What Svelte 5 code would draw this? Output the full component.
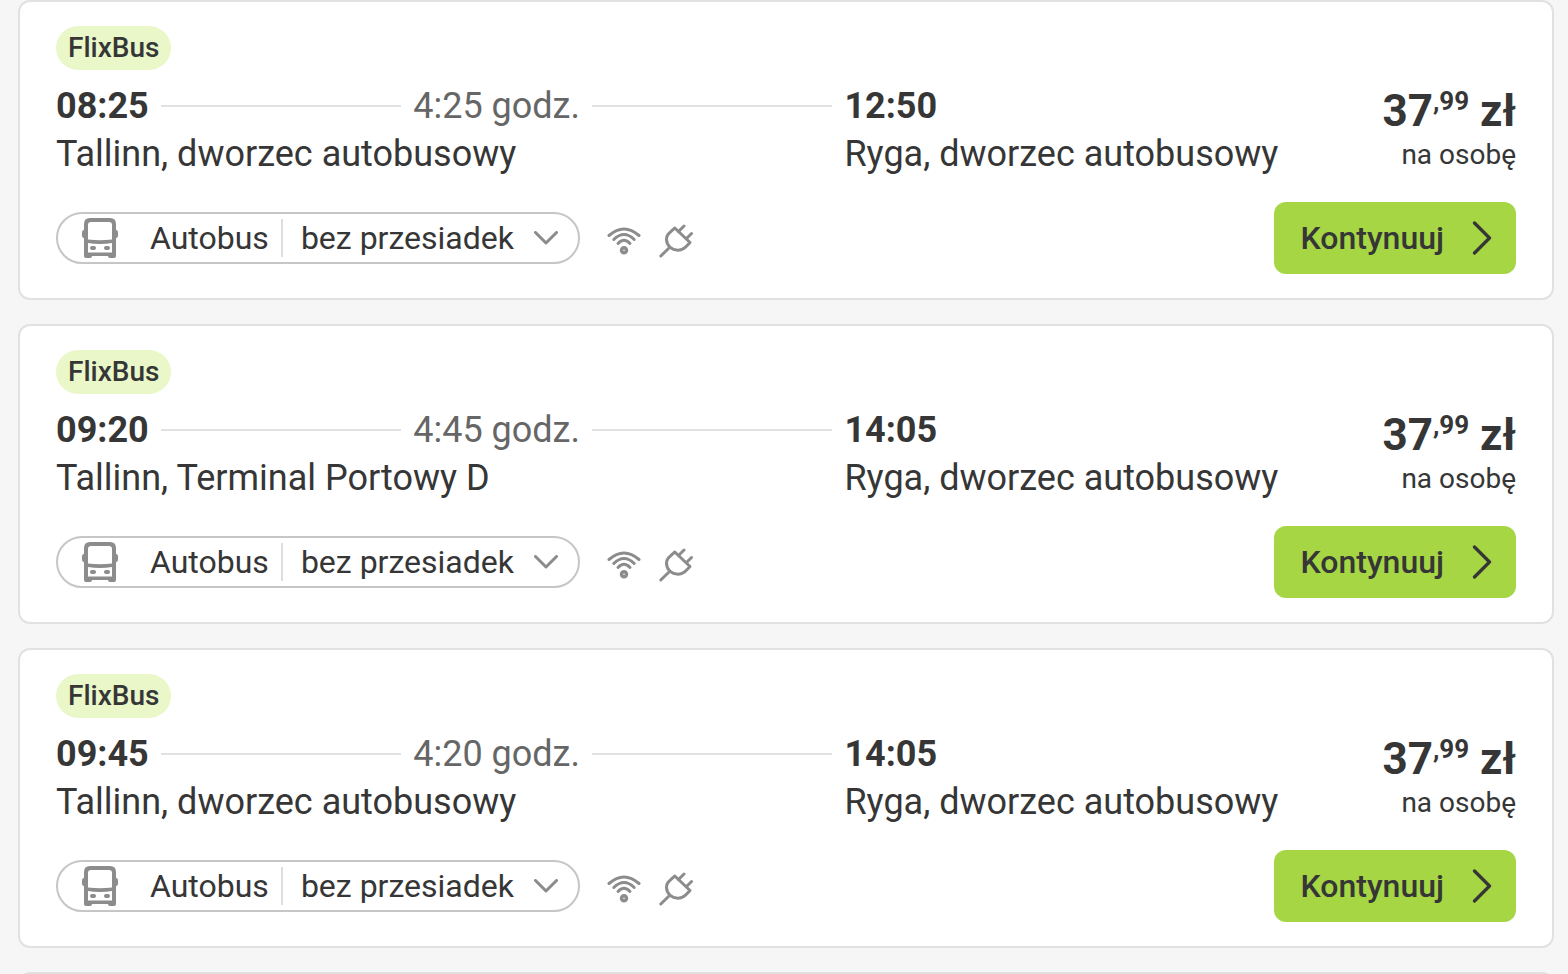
<script>
  const trips = [
    { depart: '08:25', duration: '4:25 godz.', arrive: '12:50', from: 'Tallinn, dworzec autobusowy', to: 'Ryga, dworzec autobusowy' },
    { depart: '09:20', duration: '4:45 godz.', arrive: '14:05', from: 'Tallinn, Terminal Portowy D', to: 'Ryga, dworzec autobusowy' },
    { depart: '09:45', duration: '4:20 godz.', arrive: '14:05', from: 'Tallinn, dworzec autobusowy', to: 'Ryga, dworzec autobusowy' }
  ];
</script>

<main class="results">
  {#each trips as trip}
    <article class="card">
      <span class="carrier">FlixBus</span>

      <div class="journey">
        <div class="origin">
          <div class="timeline">
            <time class="hour">{trip.depart}</time>
            <span class="rule"></span>
            <span class="duration">{trip.duration}</span>
            <span class="rule"></span>
          </div>
          <div class="place">{trip.from}</div>
        </div>
        <div class="destination">
          <time class="hour">{trip.arrive}</time>
          <div class="place">{trip.to}</div>
        </div>
        <div class="fare">
          <div class="price"><span>37</span><span class="cents">,99</span><span>&nbsp;zł</span></div>
          <div class="per">na osobę</div>
        </div>
      </div>

      <div class="actions">
        <button class="details" type="button">
          <svg class="bus" viewBox="0 0 36 40" width="36" height="40" aria-hidden="true">
            <path
              fill="#8c8c8c"
              fill-rule="evenodd"
              d="M8 0H28Q34 0 34 6V12Q36 12 36 14V18Q36 20 34 20V38Q34 40 32 40H28Q26 40 26 38H10Q10 40 8 40H4Q2 40 2 38V20Q0 20 0 18V14Q0 12 2 12V6Q2 0 8 0ZM9 4Q6 4 6 7V21.500Q18 23 30 21.500V7Q30 4 27 4ZM6 25V34.500H30V25Q18 27 6 25Z"
            />
            <rect x="8" y="28" width="6" height="4" rx="2" fill="#8c8c8c" />
            <rect x="22" y="28" width="6" height="4" rx="2" fill="#8c8c8c" />
          </svg>
          <span class="mode">Autobus</span>
          <span class="transfers">bez przesiadek</span>
          <svg viewBox="0 0 24 14" width="24" height="14" aria-hidden="true">
            <path d="M1.500 1.500L12 12L22.500 1.500" fill="none" stroke="#8c8c8c" stroke-width="3" stroke-linecap="round" stroke-linejoin="round" />
          </svg>
        </button>

        <div class="amenities">
          <svg viewBox="0 0 36 36" width="36" height="36" role="img" aria-label="Wi-Fi">
            <g fill="none" stroke="#8c8c8c" stroke-width="3" stroke-linecap="round">
              <path d="M3 13.500Q18 0.500 33 13.500" />
              <path d="M7.800 17.500Q18 7.500 28.200 17.500" />
              <path d="M12 21.500Q18 15 24 21.500" />
              <circle cx="18" cy="28.200" r="2.500" stroke-width="3.500" />
            </g>
          </svg>
          <svg viewBox="0 0 36 36" width="36" height="36" role="img" aria-label="Gniazdko">
            <g fill="none" stroke="#8c8c8c" stroke-width="3" stroke-linecap="round" stroke-linejoin="round">
              <path d="M16.800 6L32 20.500C26.500 26.500 24.500 28.200 20 28.200C13.500 28.200 8.500 23.500 8.500 17C8.500 13 11 11 16.800 6Z" />
              <path d="M10.500 26.500L2.800 34M20.500 9.500L26 4M28.500 16.500L33.500 11.500" />
            </g>
          </svg>
        </div>

        <button class="continue" type="button">
          <span>Kontynuuj</span>
          <svg viewBox="0 0 20 34" width="20" height="34" aria-hidden="true">
            <path d="M2.500 2L17.500 17L2.500 32" fill="none" stroke="#363636" stroke-width="3.300" stroke-linecap="round" stroke-linejoin="round" />
          </svg>
        </button>
      </div>
    </article>
  {/each}
  <div class="card"></div>
</main>

<style>
  :global(body) {
    margin: 0;
    background: #f6f6f6;
  }

  .results {
    box-sizing: border-box;
    height: 100vh;
    overflow: hidden;
    padding: 0 14px 0 18px;
    display: flex;
    flex-direction: column;
    gap: 24px;
    font-family: Roboto, sans-serif;
    color: #363636;
  }

  .card {
    flex: none;
    padding: 24px 36px;
    border: 2px solid #e1e1e1;
    border-radius: 12px;
    background: #fff;
  }

  .carrier {
    display: block;
    width: fit-content;
    padding: 0 12px;
    border-radius: 22px;
    background: #e9f7c9;
    font-size: 28px;
    font-weight: 500;
    line-height: 44px;
  }

  .journey {
    display: flex;
    margin-top: 12px;
    font-size: 36px;
    line-height: 48px;
    white-space: nowrap;
  }

  .origin {
    flex: none;
    box-sizing: border-box;
    width: 54%;
    padding-right: 12px;
  }

  .timeline {
    display: flex;
    align-items: center;
    gap: 12px;
  }

  .hour {
    display: block;
    font-weight: 700;
  }

  .rule {
    flex: 1;
    height: 2px;
    background: #e1e1e1;
  }

  .duration {
    color: #666;
  }

  .destination {
    flex: 1;
  }

  .fare {
    display: flex;
    flex-direction: column;
    align-items: flex-end;
  }

  .price {
    display: flex;
    align-items: flex-start;
    font-size: 44px;
    font-weight: 700;
    line-height: 58px;
  }

  .cents {
    font-size: 26px;
    line-height: 38px;
  }

  .per {
    font-size: 28px;
    line-height: 30px;
  }

  .actions {
    display: flex;
    align-items: center;
    margin-top: 24px;
  }

  button {
    display: flex;
    align-items: center;
    box-sizing: border-box;
    margin: 0;
    font-family: inherit;
    font-size: 32px;
    color: inherit;
    cursor: pointer;
  }

  .details {
    height: 52px;
    padding: 0 20px 0 24px;
    border: 2px solid #c6c6c6;
    border-radius: 26px;
    background: #fff;
  }

  .mode {
    margin-left: 32px;
    padding-right: 12px;
    border-right: 2px solid #dedede;
    line-height: 38px;
  }

  .transfers {
    margin: 0 20px 0 18px;
  }

  .amenities {
    display: flex;
    gap: 16px;
    margin-left: 26px;
    padding-top: 4px;
  }

  .continue {
    height: 72px;
    margin-left: auto;
    padding: 0 24px 0 26px;
    gap: 28px;
    border: 0;
    border-radius: 12px;
    background: #a6d644;
    font-weight: 500;
  }
</style>
